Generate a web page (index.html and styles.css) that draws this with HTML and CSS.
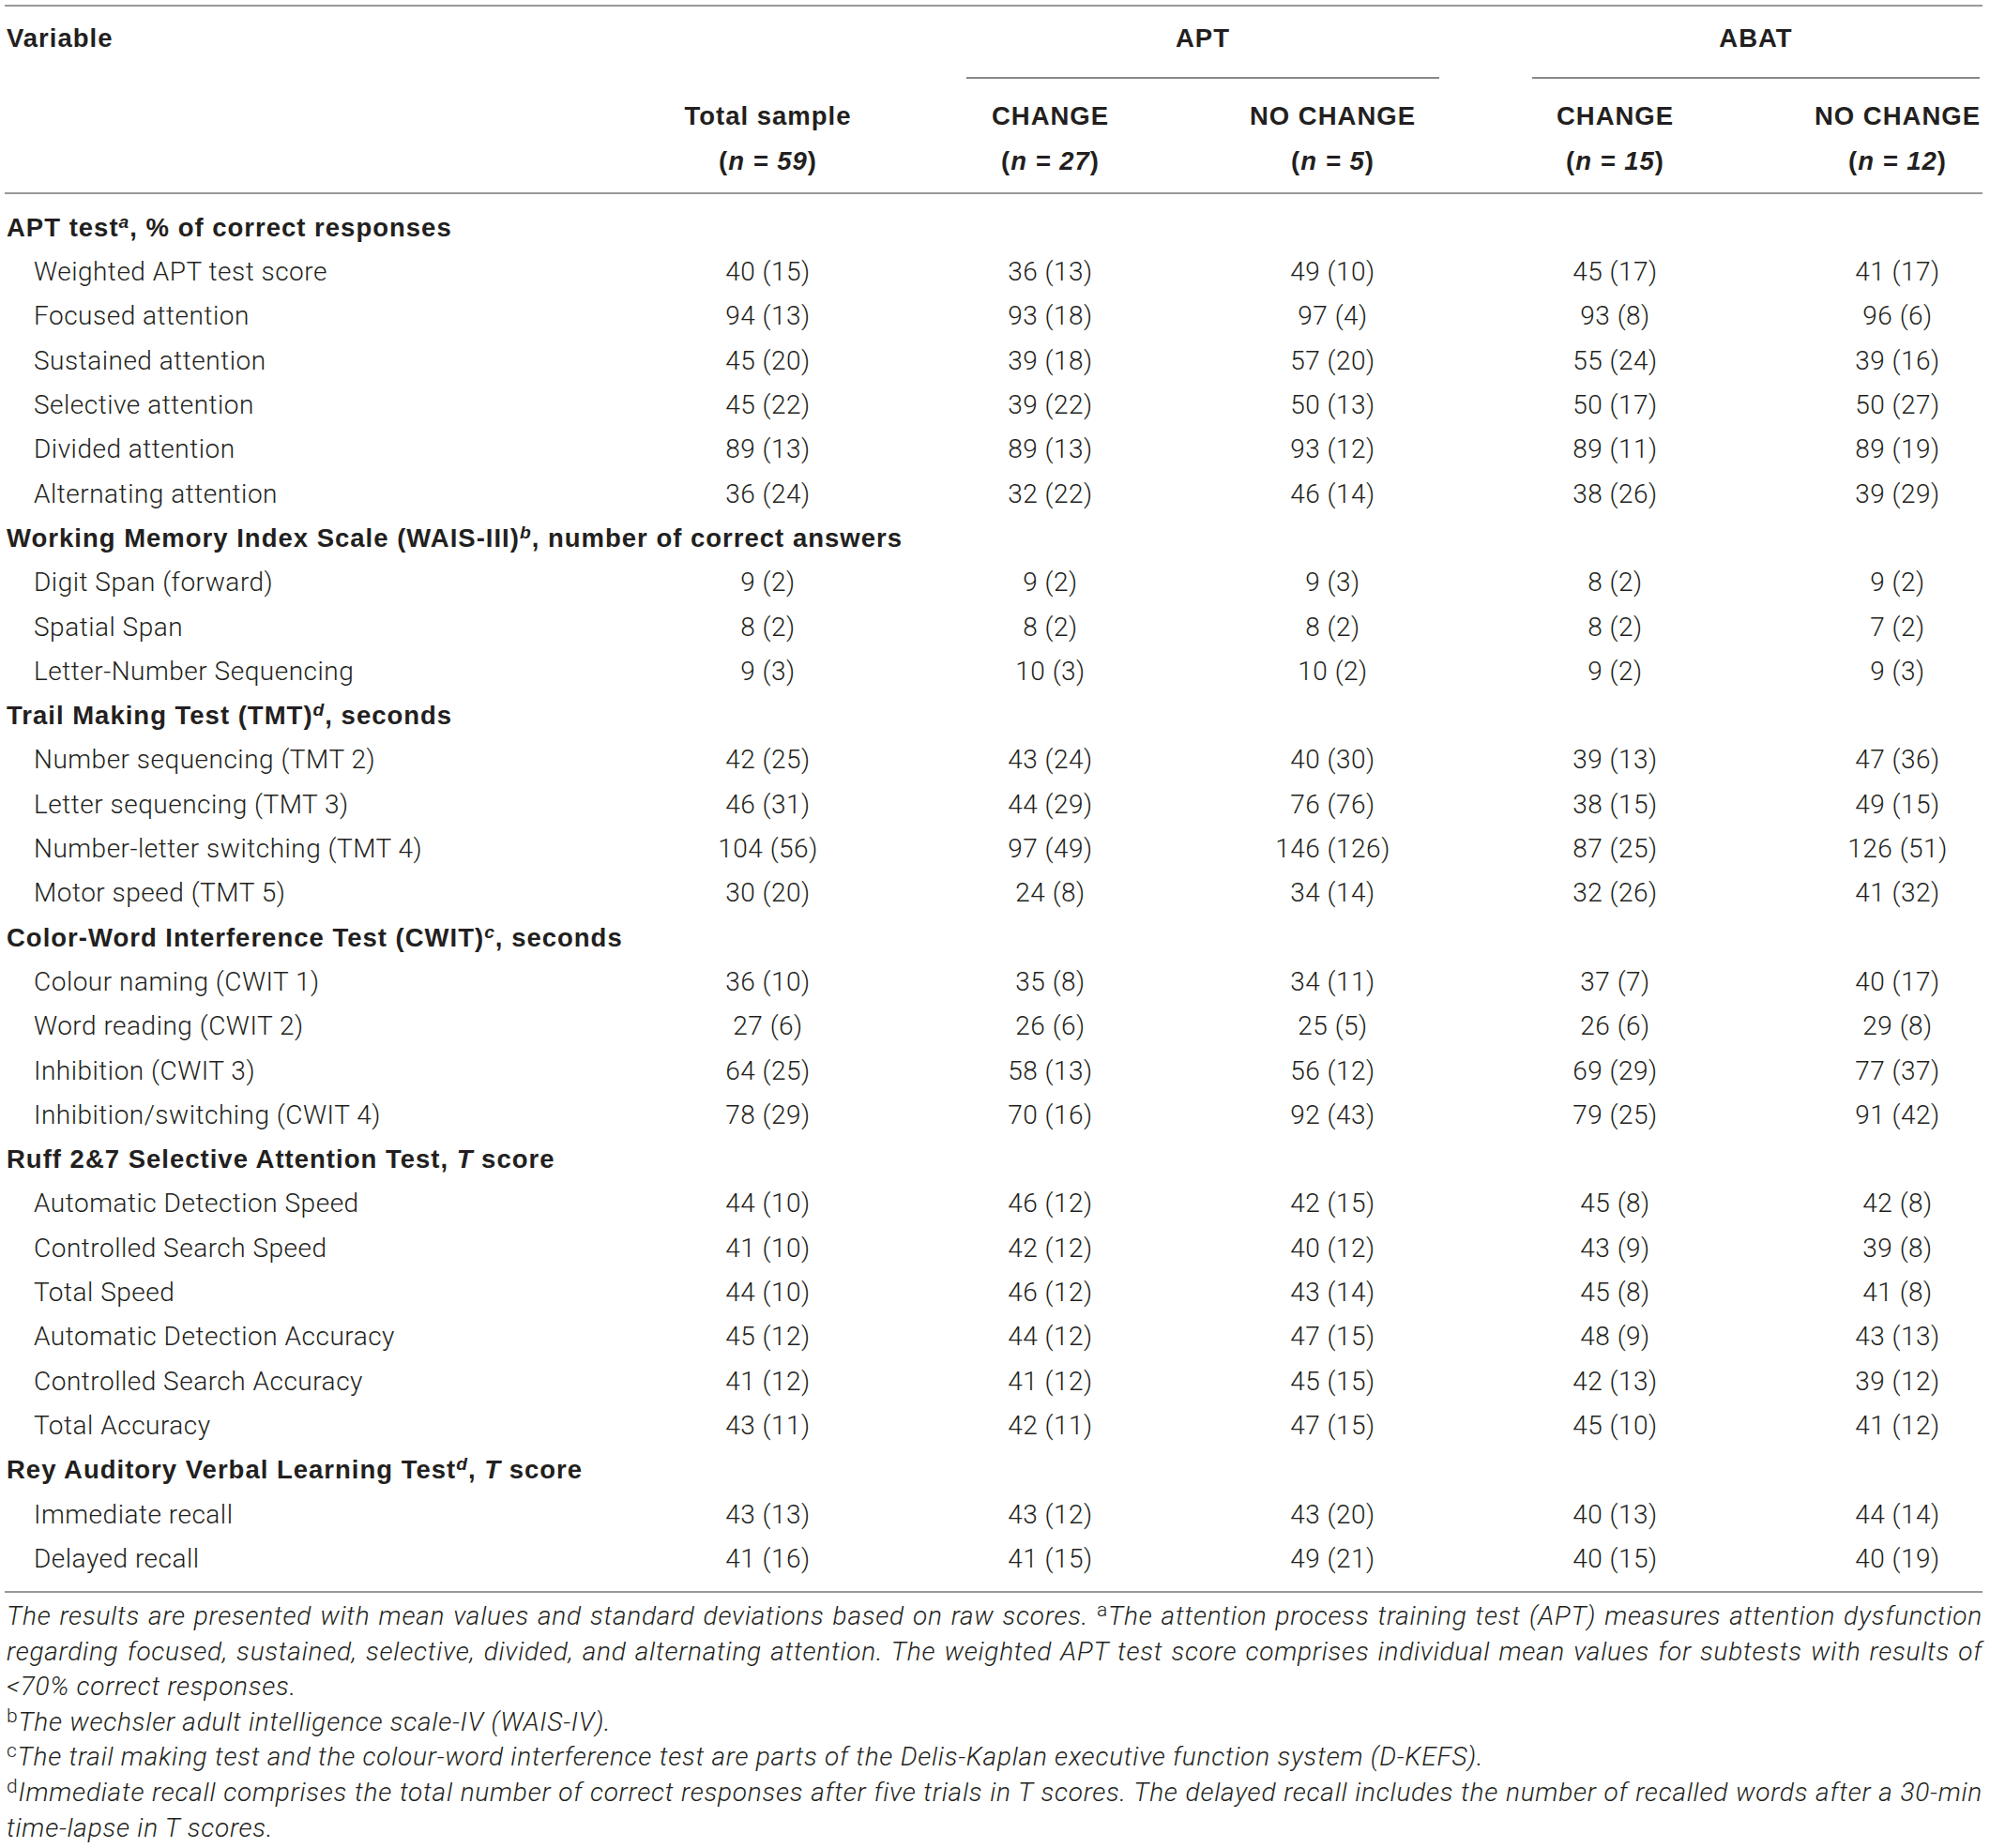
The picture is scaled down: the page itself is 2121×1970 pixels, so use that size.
FILE: index.html
```html
<!DOCTYPE html>
<html lang="en">
<head>
    <meta charset="UTF-8">
    <title>Neuropsychological test results</title>
    <link rel="stylesheet" href="styles.css">
</head>
<body>
    <div class="page">
        <table class="results">
            <colgroup>
                <col class="col-var">
                <col class="col-num">
                <col class="col-num">
                <col class="col-num">
                <col class="col-num">
                <col class="col-last">
            </colgroup>
            <thead>
                <tr class="head-top">
                    <th class="left" colspan="2">Variable</th>
                    <th colspan="2"><div class="spanner apt">APT</div></th>
                    <th colspan="2"><div class="spanner abat">ABAT</div></th>
                </tr>
                <tr class="head-mid">
                    <th></th>
                    <th>Total sample</th>
                    <th>CHANGE</th>
                    <th>NO CHANGE</th>
                    <th>CHANGE</th>
                    <th class="last">NO CHANGE</th>
                </tr>
                <tr class="head-n">
                    <th></th>
                    <th>(<i>n = 59</i>)</th>
                    <th>(<i>n = 27</i>)</th>
                    <th>(<i>n = 5</i>)</th>
                    <th>(<i>n = 15</i>)</th>
                    <th class="last">(<i>n = 12</i>)</th>
                </tr>
            </thead>
            <tbody>
                <tr class="group first">
                    <td colspan="6">APT test<sup><i>a</i></sup>, % of correct responses</td>
                </tr>
                <tr><td>Weighted APT test score</td><td>40 (15)</td><td>36 (13)</td><td>49 (10)</td><td>45 (17)</td><td class="last">41 (17)</td></tr>
                <tr><td>Focused attention</td><td>94 (13)</td><td>93 (18)</td><td>97 (4)</td><td>93 (8)</td><td class="last">96 (6)</td></tr>
                <tr><td>Sustained attention</td><td>45 (20)</td><td>39 (18)</td><td>57 (20)</td><td>55 (24)</td><td class="last">39 (16)</td></tr>
                <tr><td>Selective attention</td><td>45 (22)</td><td>39 (22)</td><td>50 (13)</td><td>50 (17)</td><td class="last">50 (27)</td></tr>
                <tr><td>Divided attention</td><td>89 (13)</td><td>89 (13)</td><td>93 (12)</td><td>89 (11)</td><td class="last">89 (19)</td></tr>
                <tr><td>Alternating attention</td><td>36 (24)</td><td>32 (22)</td><td>46 (14)</td><td>38 (26)</td><td class="last">39 (29)</td></tr>

                <tr class="group">
                    <td colspan="6">Working Memory Index Scale (WAIS-III)<sup><i>b</i></sup>, number of correct answers</td>
                </tr>
                <tr><td>Digit Span (forward)</td><td>9 (2)</td><td>9 (2)</td><td>9 (3)</td><td>8 (2)</td><td class="last">9 (2)</td></tr>
                <tr><td>Spatial Span</td><td>8 (2)</td><td>8 (2)</td><td>8 (2)</td><td>8 (2)</td><td class="last">7 (2)</td></tr>
                <tr><td>Letter-Number Sequencing</td><td>9 (3)</td><td>10 (3)</td><td>10 (2)</td><td>9 (2)</td><td class="last">9 (3)</td></tr>

                <tr class="group">
                    <td colspan="6">Trail Making Test (TMT)<sup><i>d</i></sup>, seconds</td>
                </tr>
                <tr><td>Number sequencing (TMT 2)</td><td>42 (25)</td><td>43 (24)</td><td>40 (30)</td><td>39 (13)</td><td class="last">47 (36)</td></tr>
                <tr><td>Letter sequencing (TMT 3)</td><td>46 (31)</td><td>44 (29)</td><td>76 (76)</td><td>38 (15)</td><td class="last">49 (15)</td></tr>
                <tr><td>Number-letter switching (TMT 4)</td><td>104 (56)</td><td>97 (49)</td><td>146 (126)</td><td>87 (25)</td><td class="last">126 (51)</td></tr>
                <tr><td>Motor speed (TMT 5)</td><td>30 (20)</td><td>24 (8)</td><td>34 (14)</td><td>32 (26)</td><td class="last">41 (32)</td></tr>

                <tr class="group">
                    <td colspan="6">Color-Word Interference Test (CWIT)<sup><i>c</i></sup>, seconds</td>
                </tr>
                <tr><td>Colour naming (CWIT 1)</td><td>36 (10)</td><td>35 (8)</td><td>34 (11)</td><td>37 (7)</td><td class="last">40 (17)</td></tr>
                <tr><td>Word reading (CWIT 2)</td><td>27 (6)</td><td>26 (6)</td><td>25 (5)</td><td>26 (6)</td><td class="last">29 (8)</td></tr>
                <tr><td>Inhibition (CWIT 3)</td><td>64 (25)</td><td>58 (13)</td><td>56 (12)</td><td>69 (29)</td><td class="last">77 (37)</td></tr>
                <tr><td>Inhibition/switching (CWIT 4)</td><td>78 (29)</td><td>70 (16)</td><td>92 (43)</td><td>79 (25)</td><td class="last">91 (42)</td></tr>

                <tr class="group">
                    <td colspan="6">Ruff 2&amp;7 Selective Attention Test, <i>T</i> score</td>
                </tr>
                <tr><td>Automatic Detection Speed</td><td>44 (10)</td><td>46 (12)</td><td>42 (15)</td><td>45 (8)</td><td class="last">42 (8)</td></tr>
                <tr><td>Controlled Search Speed</td><td>41 (10)</td><td>42 (12)</td><td>40 (12)</td><td>43 (9)</td><td class="last">39 (8)</td></tr>
                <tr><td>Total Speed</td><td>44 (10)</td><td>46 (12)</td><td>43 (14)</td><td>45 (8)</td><td class="last">41 (8)</td></tr>
                <tr><td>Automatic Detection Accuracy</td><td>45 (12)</td><td>44 (12)</td><td>47 (15)</td><td>48 (9)</td><td class="last">43 (13)</td></tr>
                <tr><td>Controlled Search Accuracy</td><td>41 (12)</td><td>41 (12)</td><td>45 (15)</td><td>42 (13)</td><td class="last">39 (12)</td></tr>
                <tr><td>Total Accuracy</td><td>43 (11)</td><td>42 (11)</td><td>47 (15)</td><td>45 (10)</td><td class="last">41 (12)</td></tr>

                <tr class="group">
                    <td colspan="6">Rey Auditory Verbal Learning Test<sup><i>d</i></sup>, <i>T</i> score</td>
                </tr>
                <tr><td>Immediate recall</td><td>43 (13)</td><td>43 (12)</td><td>43 (20)</td><td>40 (13)</td><td class="last">44 (14)</td></tr>
                <tr class="final"><td>Delayed recall</td><td>41 (16)</td><td>41 (15)</td><td>49 (21)</td><td>40 (15)</td><td class="last">40 (19)</td></tr>
            </tbody>
        </table>

        <div class="notes">
            <p>The results are presented with mean values and standard deviations based on raw scores. <sup>a</sup>The attention process training test (APT) measures attention dysfunction regarding focused, sustained, selective, divided, and alternating attention. The weighted APT test score comprises individual mean values for subtests with results of &lt;70% correct responses.</p>
            <p><sup>b</sup>The wechsler adult intelligence scale-IV (WAIS-IV).</p>
            <p><sup>c</sup>The trail making test and the colour-word interference test are parts of the Delis-Kaplan executive function system (D-KEFS).</p>
            <p><sup>d</sup>Immediate recall comprises the total number of correct responses after five trials in T scores. The delayed recall includes the number of recalled words after a 30-min time-lapse in T scores.</p>
        </div>
    </div>
</body>
</html>
```

FILE: styles.css
```css
body {
    margin: 0;
    background: #fff;
    color: #231f20;
    font-family: Roboto, 'Liberation Sans', Arial, sans-serif;
    font-weight: 300;
    font-size: 28px;
    letter-spacing: 0.5px;
}
.page {
    width: 2108px;
    margin-left: 5px;
    padding-top: 5px;
}
.results {
    width: 2108px;
    table-layout: fixed;
    border-collapse: collapse;
}
.col-var {
    width: 663px;
}
.col-num {
    width: 301px;
}
.col-last {
    width: 241px;
}
th, td {
    padding: 0;
    text-align: center;
    line-height: 47.3px;
    white-space: nowrap;
}
th {
    font-family: 'Liberation Sans', Arial, sans-serif;
    font-weight: 700;
    font-size: 27.5px;
    letter-spacing: 1px;
}
.left {
    text-align: left;
    padding-left: 2px;
}
.last {
    padding-left: 60px;
}
.head-top th {
    border-top: 2px solid #999;
    padding-top: 10px;
    vertical-align: top;
}
.spanner {
    padding-bottom: 18px;
    border-bottom: 2px solid #888;
}
.spanner.apt {
    margin: 0 37px 0 61px;
}
.spanner.abat {
    margin: 0 3px 0 62px;
}
.head-mid th {
    padding-top: 16px;
}
.head-n th {
    padding-bottom: 10px;
    border-bottom: 2px solid #999;
}
tbody td:first-child {
    text-align: left;
    padding-left: 31px;
}
tbody .group td {
    padding-left: 2px;
    font-family: 'Liberation Sans', Arial, sans-serif;
    font-weight: 700;
    font-size: 27.5px;
    letter-spacing: 1px;
}
tbody .first td {
    padding-top: 12px;
}
tbody .final td {
    padding-bottom: 11px;
    border-bottom: 2px solid #999;
}
sup {
    font-size: 0.7em;
    line-height: 0;
    vertical-align: 0.45em;
}
.notes {
    padding: 6px 0 0 2px;
    font-style: italic;
    font-size: 28px;
    letter-spacing: 0.75px;
    line-height: 37.6px;
}
.notes p {
    margin: 0;
    text-align: justify;
}
.notes sup {
    font-style: normal;
    font-size: 0.75em;
}
```
